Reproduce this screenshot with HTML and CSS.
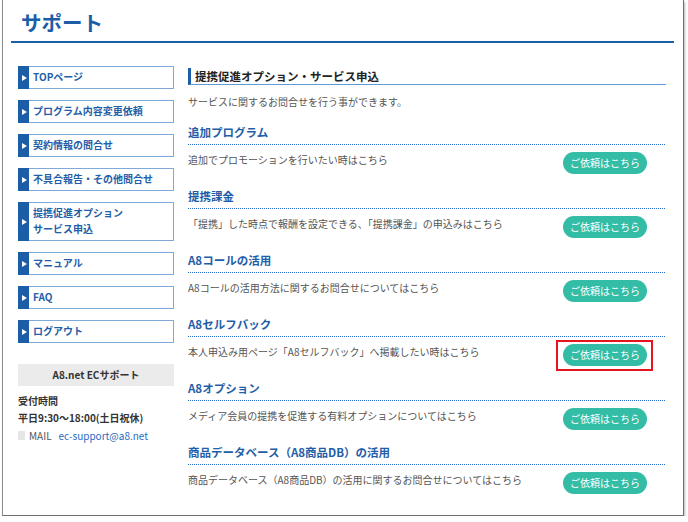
FILE: index.html
```html
<!DOCTYPE html>
<html lang="ja">
<head>
<meta charset="utf-8">
<title>サポート</title>
<link rel="stylesheet" href="styles.css">
</head>
<body>
<div class="frame">
  <header class="page-head">
    <h1 class="page-title">サポート</h1>
  </header>
  <div class="layout">
    <aside class="side">
      <nav class="nav">
        <a class="nav-item" href="#"><span class="nav-mark"></span><span class="nav-text">TOPページ</span></a>
        <a class="nav-item" href="#"><span class="nav-mark"></span><span class="nav-text">プログラム内容変更依頼</span></a>
        <a class="nav-item" href="#"><span class="nav-mark"></span><span class="nav-text">契約情報の問合せ</span></a>
        <a class="nav-item" href="#"><span class="nav-mark"></span><span class="nav-text">不具合報告・その他問合せ</span></a>
        <a class="nav-item" href="#"><span class="nav-mark"></span><span class="nav-text">提携促進オプション<br>サービス申込</span></a>
        <a class="nav-item" href="#"><span class="nav-mark"></span><span class="nav-text">マニュアル</span></a>
        <a class="nav-item" href="#"><span class="nav-mark"></span><span class="nav-text">FAQ</span></a>
        <a class="nav-item" href="#"><span class="nav-mark"></span><span class="nav-text">ログアウト</span></a>
      </nav>
      <div class="support">
        <div class="support-title">A8.net ECサポート</div>
        <p class="support-hours">受付時間<br>平日9:30～18:00(土日祝休)</p>
        <p class="support-mail"><span class="mail-icon"></span><span class="mail-label">MAIL</span><a class="mail-link" href="#">ec-support@a8.net</a></p>
      </div>
    </aside>
    <main class="main">
      <h2 class="main-title">提携促進オプション・サービス申込</h2>
      <p class="intro">サービスに関するお問合せを行う事ができます。</p>

      <section class="svc">
        <h3 class="svc-title">追加プログラム</h3>
        <div class="svc-row">
          <p class="svc-desc">追加でプロモーションを行いたい時はこちら</p>
          <span class="btn-wrap"><a class="btn" href="#">ご依頼はこちら</a></span>
        </div>
      </section>

      <section class="svc">
        <h3 class="svc-title">提携課金</h3>
        <div class="svc-row">
          <p class="svc-desc">「提携」した時点で報酬を設定できる、「提携課金」の申込みはこちら</p>
          <span class="btn-wrap"><a class="btn" href="#">ご依頼はこちら</a></span>
        </div>
      </section>

      <section class="svc">
        <h3 class="svc-title">A8コールの活用</h3>
        <div class="svc-row">
          <p class="svc-desc">A8コールの活用方法に関するお問合せについてはこちら</p>
          <span class="btn-wrap"><a class="btn" href="#">ご依頼はこちら</a></span>
        </div>
      </section>

      <section class="svc">
        <h3 class="svc-title">A8セルフバック</h3>
        <div class="svc-row">
          <p class="svc-desc">本人申込み用ページ「A8セルフバック」へ掲載したい時はこちら</p>
          <span class="btn-wrap"><a class="btn" href="#">ご依頼はこちら</a><span class="highlight"></span></span>
        </div>
      </section>

      <section class="svc">
        <h3 class="svc-title">A8オプション</h3>
        <div class="svc-row">
          <p class="svc-desc">メディア会員の提携を促進する有料オプションについてはこちら</p>
          <span class="btn-wrap"><a class="btn" href="#">ご依頼はこちら</a></span>
        </div>
      </section>

      <section class="svc">
        <h3 class="svc-title">商品データベース（A8商品DB）の活用</h3>
        <div class="svc-row">
          <p class="svc-desc">商品データベース（A8商品DB）の活用に関するお問合せについてはこちら</p>
          <span class="btn-wrap"><a class="btn" href="#">ご依頼はこちら</a></span>
        </div>
      </section>
    </main>
  </div>
</div>
</body>
</html>
```

FILE: styles.css
```css
* { box-sizing: border-box; }
html, body { margin: 0; padding: 0; background: #fff; }
body {
  font-family: "Noto Sans CJK JP", "Noto Sans", sans-serif;
  font-size: 10px;
  color: #444;
}
p, h1, h2, h3 { margin: 0; }
a { text-decoration: none; }

.frame {
  margin-left: 2px;
  width: 682px;
  height: 516px;
  border-left: 1px solid #8c8c8c;
  border-right: 1px solid #6e6e6e;
  border-bottom: 1px solid #6e6e6e;
  box-shadow: 1px 2px 2px rgba(0, 0, 0, 0.28);
  position: relative;
}

.page-head {
  margin: 0 9px 0 8px;
  height: 43px;
  padding: 8px 0 0 10px;
  border-bottom: 2px solid #1c5da7;
}
.page-title {
  font-size: 20.5px;
  line-height: 28px;
  font-weight: bold;
  color: #1c5da7;
}

.layout {
  display: flex;
  gap: 14px;
  margin: 23px 0 0 15px;
}

.side { width: 156px; flex: none; }
.nav { display: flex; flex-direction: column; gap: 11px; }
.nav-item {
  display: flex;
  align-items: stretch;
  border: 1px solid #7fa9d8;
  border-left: none;
  color: #1f5ea8;
  font-weight: bold;
  font-size: 10px;
  line-height: 16px;
}
.nav-mark {
  width: 11px;
  flex: none;
  background: #1c5da7;
  display: flex;
  align-items: center;
  justify-content: center;
  margin: -1px 0;
}
.nav-mark::before {
  content: "";
  border-left: 5px solid #fff;
  border-top: 3.5px solid transparent;
  border-bottom: 3.5px solid transparent;
  margin-left: 1px;
}
.nav-text { padding: 2px 0 3px 4px; }

.support { margin-top: 21px; }
.support-title {
  background: #ebebeb;
  height: 22px;
  line-height: 22px;
  text-align: center;
  font-weight: bold;
  color: #333;
}
.support-hours {
  margin-top: 6px;
  line-height: 17px;
  font-weight: bold;
  color: #333;
}
.support-mail {
  margin-top: 1px;
  display: flex;
  align-items: center;
  line-height: 17px;
}
.mail-icon {
  width: 7px;
  height: 9px;
  background: #e6e6e6;
  margin-right: 4px;
}
.mail-label { color: #555; margin-right: 7px; }
.mail-link { color: #2a6cbf; }

.main { width: 478px; padding-top: 2px; }
.main-title {
  font-size: 11.5px;
  line-height: 16px;
  font-weight: bold;
  color: #222;
  border-left: 3px solid #1c5da7;
  border-bottom: 1px solid #5e9bd6;
  padding-left: 4px;
}
.intro { margin-top: 9px; line-height: 16px; color: #555; }

.svc { margin-top: 14px; }
.svc-title {
  font-size: 11.5px;
  line-height: 16px;
  font-weight: bold;
  color: #1f5ea8;
  padding-bottom: 5px;
  background-image: linear-gradient(to right, #2468c8 50%, transparent 50%);
  background-size: 2px 1px;
  background-repeat: repeat-x;
  background-position: left bottom;
}
.svc-row {
  display: flex;
  justify-content: space-between;
  align-items: flex-start;
  padding-top: 7px;
}
.svc-desc { line-height: 16px; color: #555; }
.btn-wrap {
  position: relative;
  margin-right: 19px;
  flex: none;
}
.btn {
  display: block;
  width: 84px;
  height: 22px;
  line-height: 22px;
  border-radius: 11px;
  background: #33bca6;
  color: #fff;
  text-align: center;
  font-size: 10px;
}
.highlight {
  position: absolute;
  left: -7px;
  top: -4px;
  width: 97px;
  height: 31px;
  border: 2px solid #e3161f;
}
```
